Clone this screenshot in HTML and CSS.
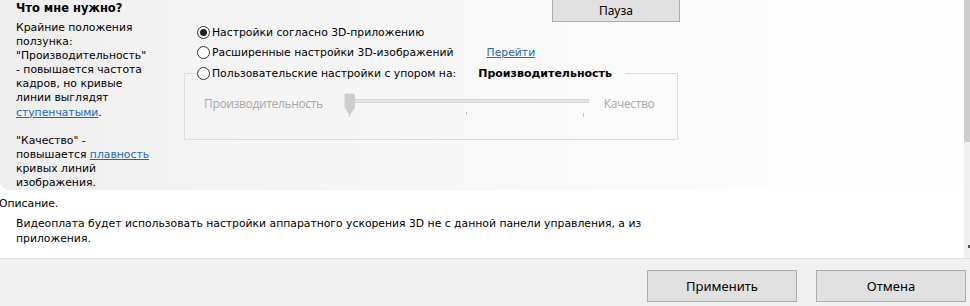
FILE: index.html
```html
<!DOCTYPE html>
<html lang="ru">
<head>
<meta charset="utf-8">
<title>Настройки 3D</title>
<link rel="stylesheet" href="styles.css">
</head>
<body>
<div class="window">
  <div class="content">
    <div class="scrollarea">
      <div class="top">
        <div class="help">
          <div class="help-title">Что мне нужно?</div>
          <div class="help-text">
            Крайние положения<br>
            ползунка:<br>
            "Производительность"<br>
            - повышается частота<br>
            кадров, но кривые<br>
            линии выглядят<br>
            <a class="link" href="#">ступенчатыми</a>.<br>
            <br>
            "Качество" -<br>
            повышается <a class="link" href="#">плавность</a><br>
            кривых линий<br>
            изображения.
          </div>
        </div>
        <div class="settings">
          <div class="pause-row"><button class="btn pause">Пауза</button></div>
          <label class="radio-row"><span class="radio checked"></span>Настройки согласно 3D-приложению</label>
          <div class="radio-row">
            <label class="radio-label"><span class="radio"></span>Расширенные настройки 3D-изображений</label>
            <a class="link goto" href="#">Перейти</a>
          </div>
          <fieldset class="group">
            <legend class="group-legend"><span class="radio"></span>Пользовательские настройки с упором на:<b class="mode">Производительность</b></legend>
            <div class="slider-row">
              <span class="slider-label">Производительность</span>
              <svg class="slider" width="246" height="25" viewBox="0 0 246 25">
                <rect x="10.5" y="6.5" width="234" height="3" fill="#e6e6e6" stroke="#d8d8d8"/>
                <path d="M0.5 2 Q0.5 0.5 2 0.5 L9.5 0.5 Q11 0.5 11 2 L11 14.5 L5.75 22.5 L0.5 14.5 Z" fill="#cdcdcd"/>
                <line x1="5.5" y1="20" x2="5.5" y2="24" stroke="#c6c6c6"/>
                <line x1="122.5" y1="19" x2="122.5" y2="22" stroke="#c6c6c6"/>
                <line x1="239.5" y1="20" x2="239.5" y2="24" stroke="#c6c6c6"/>
              </svg>
              <span class="slider-label">Качество</span>
            </div>
          </fieldset>
        </div>
      </div>
      <div class="desc">
        <div class="desc-title">Описание.</div>
        <div class="desc-text">Видеоплата будет использовать настройки аппаратного ускорения 3D не с данной панели управления, а из<br>приложения.</div>
      </div>
    </div>
    <div class="scrollbar"><div class="thumb"></div><div class="track"><span class="arrow"></span></div></div>
  </div>
  <div class="footer">
    <button class="btn action">Применить</button>
    <button class="btn action">Отмена</button>
  </div>
</div>
</body>
</html>
```

FILE: styles.css
```css
* { box-sizing: border-box; }
html, body { margin: 0; padding: 0; }
body {
  width: 970px;
  height: 306px;
  overflow: hidden;
  background: #ffffff;
  font-family: "DejaVu Sans", Verdana, sans-serif;
  font-size: 10.8px;
  color: #000;
}
.window { display: flex; flex-direction: column; height: 306px; }
.content { display: flex; height: 258px; }
.scrollarea { flex: 1; display: flex; flex-direction: column; overflow: hidden; }

.top {
  height: 190px;
  display: flex;
  background: linear-gradient(to right, #eeeeee 0%, #f3f3f3 20%, #f8f8f8 50%, #fdfdfd 80%, #fefefe 100%);
  border-bottom-left-radius: 9px;
}
.help { width: 184px; padding-left: 16px; flex: none; }
.help-title { font-weight: bold; font-size: 11.5px; line-height: 17px; margin-bottom: 4px; white-space: nowrap; }
.help-text { line-height: 14.1px; white-space: nowrap; }
.link { color: #1c6ab5; text-decoration: underline; }

.settings { width: 495px; display: flex; flex-direction: column; }
.pause-row { display: flex; justify-content: flex-end; height: 22px; margin-top: -1px; }
.btn {
  font-family: "Noto Sans", "Open Sans", sans-serif;
  background: #e1e1e1;
  border: 1px solid #adadad;
  color: #000;
  padding: 0;
  margin: 0;
}
.pause { width: 128px; height: 23px; font-size: 12px; margin-right: -1px; }

.radio-row { display: flex; align-items: center; height: 20px; padding-left: 13px; white-space: nowrap; }
.radio-row:first-of-type { margin-top: 1px; }
.radio-label { display: flex; align-items: center; }
.radio {
  width: 13px; height: 13px;
  border: 1px solid #333;
  border-radius: 50%;
  background: #fff;
  margin-right: 2px;
  flex: none;
  display: inline-flex;
  align-items: center;
  justify-content: center;
}
.radio.checked::after {
  content: "";
  width: 7px; height: 7px; border-radius: 50%; background: #222;
}
.goto { margin-left: 33px; }

.group {
  margin: 1px 0 0 0;
  padding: 0 0 0 12px;
  border: 1px solid #dcdcdc;
  height: 77px;
  width: 494px;
  min-width: 0;
}
.group-legend {
  padding: 0 13px 0 0;
  display: flex;
  align-items: center;
  height: 20px;
  white-space: nowrap;
}
.mode { font-weight: bold; margin-left: 22px; font-size: 11px; }

.slider-row { display: flex; align-items: flex-start; margin: 10px 0 0 7px; }
.slider-label {
  font-family: "Open Sans", "Noto Sans", sans-serif;
  font-size: 12px;
  color: #a9a9a9;
  line-height: 16px;
  margin-top: 3px;
  letter-spacing: -0.35px;
}
.slider { margin: 0 14px 0 21px; flex: none; }

.desc { background: #fff; flex: 1; }
.desc-title { margin-left: -1px; line-height: 15px; margin-top: 6px; }
.desc-text { padding-left: 16px; line-height: 15px; margin-top: 5px; white-space: nowrap; }

.scrollbar { width: 6px; display: flex; flex-direction: column; flex: none; }
.thumb { height: 142px; background: #cdcdcd; }
.track { flex: 1; background: #efefef; position: relative; }
.arrow { position: absolute; right: 0; bottom: 10px; width: 2px; height: 3px; background: #555; }

.footer {
  height: 48px;
  border-top: 1px solid #dfdfdf;
  background: #f0f0f0;
  display: flex;
  justify-content: flex-end;
  align-items: flex-start;
  padding: 11px 4px 0 0;
  gap: 19px;
}
.action { width: 150px; height: 32px; font-size: 13px; }
```
